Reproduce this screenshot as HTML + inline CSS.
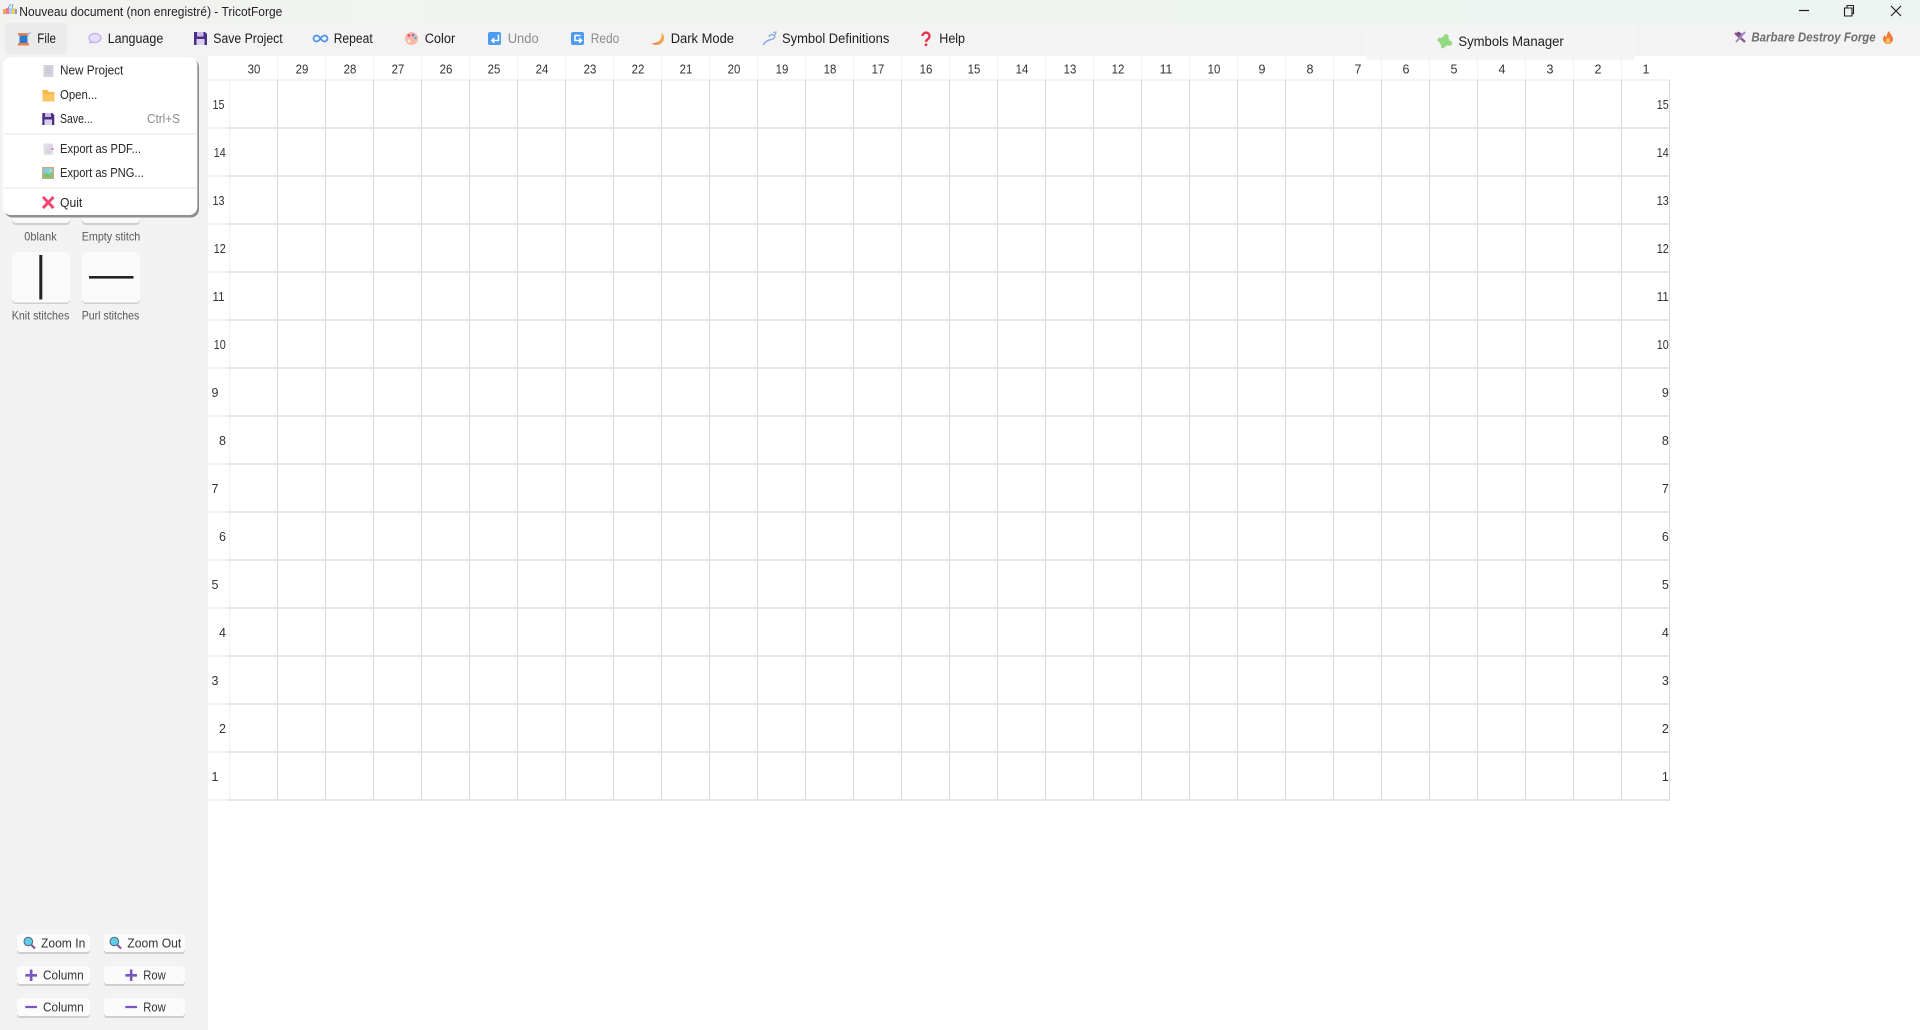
<!DOCTYPE html>
<html lang="en"><head><meta charset="utf-8"><title>TricotForge</title>
<style>
html,body{margin:0;padding:0;background:#fff;width:1920px;height:1030px;overflow:hidden}
svg{display:block;filter:blur(.3px)}
text{font-family:"Liberation Sans",sans-serif;white-space:pre}
.t{font-size:13.5px;fill:#1c1c1c}
.d{font-size:13.5px;fill:#8c8c8c}
.m{font-size:12.5px;fill:#262626}
.s{font-size:12px;fill:#5a5a5a}
.b{font-size:12.5px;fill:#333}
.n{font-size:12.5px;fill:#333}
.c{text-anchor:middle}
.e{text-anchor:end}
</style></head><body>
<svg xmlns="http://www.w3.org/2000/svg" width="1920" height="1030" viewBox="0 0 1920 1030">
<defs><linearGradient id="tb" x1="0" x2="1" y1="0" y2="0"><stop offset="0" stop-color="#f2f3f0"/><stop offset=".5" stop-color="#eff4f0"/><stop offset="1" stop-color="#edf4f1"/></linearGradient></defs>
<rect width="1920" height="1030" fill="#fff"/>
<rect width="1920" height="24" fill="url(#tb)"/>
<rect y="24" width="1920" height="32" fill="#f3f3f3"/>
<rect y="56" width="208" height="974" fill="#f2f2f2"/>

<!-- title bar -->
<g><rect x="3" y="9" width="3" height="5" fill="#f2a65a"/><rect x="6" y="8" width="3" height="6" fill="#f07a9a"/><rect x="9" y="8" width="3" height="6" fill="#a8cfe8"/><rect x="12" y="8" width="3" height="6" fill="#e3d45a"/><rect x="15" y="9" width="2" height="5" fill="#a58ae0"/><path d="M8 8 L11 4 M12 8 L13 4" stroke="#6aa0c8" stroke-width="1"/></g>
<text x="19.3" y="15.9" font-size="12.5" fill="#222" textLength="263" lengthAdjust="spacingAndGlyphs">Nouveau document (non enregistré) - TricotForge</text>
<path d="M1799 10.5H1809" stroke="#222" stroke-width="1.2"/>
<path d="M1844.5 8h7.5v8h-7.5z M1847 8v-2.500h6.500v8h-1.500" fill="none" stroke="#222" stroke-width="1.1"/>
<path d="M1891 6L1901 16M1901 6L1891 16" stroke="#222" stroke-width="1.2"/>

<!-- toolbar -->
<rect x="5" y="23" width="62" height="31" rx="5" fill="#ebebeb"/>
<rect x="18" y="33" width="11" height="2.5" fill="#e8834a"/><rect x="18" y="43" width="11" height="2.5" fill="#e8834a"/><rect x="19.5" y="35.5" width="8" height="7.5" fill="#2c7ad0"/><path d="M27 35L31 32" stroke="#9fc6ea" stroke-width="1.2"/>
<text class="t" x="37.3" y="43.1" textLength="18.7" lengthAdjust="spacingAndGlyphs">File</text>

<ellipse cx="95" cy="38" rx="6" ry="4.5" fill="#e6def8" stroke="#c4b2ec" stroke-width="1.4"/><path d="M90 41l-1 3 4-1.5z" fill="#c4b2ec"/>
<text class="t" x="107.7" y="43.1" textLength="55.6" lengthAdjust="spacingAndGlyphs">Language</text>

<path d="M194 32h11l2 2v11h-13z" fill="#4a2f86"/><rect x="197" y="32" width="6.5" height="4.5" fill="#cbb8e8"/><rect x="196.5" y="39" width="8" height="6" fill="#dccfee"/>
<text class="t" x="213.3" y="43.1" textLength="69.4" lengthAdjust="spacingAndGlyphs">Save Project</text>

<path d="M320.5 38.5c-1.5-2.2-2.8-3-4-3a3 3 0 0 0 0 6c1.2 0 2.5-.8 4-3c1.5-2.2 2.8-3 4-3a3 3 0 0 1 0 6c-1.2 0-2.5-.8-4-3z" fill="none" stroke="#4d92ec" stroke-width="1.7"/>
<text class="t" x="333.7" y="43.1" textLength="39" lengthAdjust="spacingAndGlyphs">Repeat</text>

<circle cx="411.5" cy="38.5" r="6.5" fill="#f7b9a6"/><circle cx="409" cy="35.5" r="1.4" fill="#e0507a"/><circle cx="413" cy="35" r="1.3" fill="#7a72d8"/><circle cx="415.5" cy="38" r="1.3" fill="#52b0d8"/><circle cx="409" cy="41" r="1.4" fill="#f5f0e6"/>
<text class="t" x="424.7" y="43.1" textLength="30.6" lengthAdjust="spacingAndGlyphs">Color</text>

<rect x="488" y="32" width="13" height="13" rx="2" fill="#4d9bef"/><path d="M497.5 35.5h1v5h-6.5m2.3-2.3l-2.5 2.3 2.5 2.3" fill="none" stroke="#fff" stroke-width="1.5"/>
<text class="d" x="507.7" y="43.1" textLength="31" lengthAdjust="spacingAndGlyphs">Undo</text>

<rect x="571" y="32" width="13" height="13" rx="2" fill="#4d9bef"/><path d="M580.5 35.5h-5.5v5h6.5m-2.3-2.3l2.5 2.3-2.5 2.3" fill="none" stroke="#fff" stroke-width="1.5"/>
<text class="d" x="590.7" y="43.1" textLength="28.6" lengthAdjust="spacingAndGlyphs">Redo</text>

<path d="M661.500 32.500c3.500 3 3.500 9-1 11.500-3 1.600-6.500 1.200-9-1 3 .5 6.500-.6 8.500-3 1.500-2 2-4.800 1.500-7.500z" fill="#f4a64d"/><path d="M651.500 43c3.200.5 6.500-.3 8.500-2.500-1 3.500-5.500 5.500-8.500 2.500z" fill="#ef7f4a"/>
<text class="t" x="670.7" y="43.1" textLength="63.3" lengthAdjust="spacingAndGlyphs">Dark Mode</text>

<path d="M763 45c2-3 5-5 8-5.500 3-.5 4.500-2.500 3.500-4-1-1.500-3.500-1-6 1" fill="none" stroke="#86a9e2" stroke-width="1.4"/><path d="M773 32.500l3-.5-.7 3" fill="none" stroke="#86a9e2" stroke-width="1.100"/>
<text class="t" x="782" y="43.1" textLength="107.3" lengthAdjust="spacingAndGlyphs">Symbol Definitions</text>

<path d="M922.500 36a3.500 3.500 0 1 1 5.500 3c-1.500 1-2 1.700-2 3" fill="none" stroke="#e9304f" stroke-width="2.300"/><circle cx="926" cy="44.800" r="1.400" fill="#e9304f"/>
<text class="t" x="939.3" y="43.1" textLength="25.7" lengthAdjust="spacingAndGlyphs">Help</text>

<!-- Symbols manager panel -->
<rect x="1366.500" y="27.500" width="268" height="32" fill="#f4f4f4" stroke="#f7f7f7"/>
<g fill="#93d883" transform="rotate(18 1444.500 41.500)"><rect x="1440.500" y="37.500" width="8" height="8"/><circle cx="1444.500" cy="36.500" r="2.600"/><circle cx="1449.800" cy="41.500" r="2.600"/><circle cx="1439.300" cy="41.500" r="2.100"/><circle cx="1444.500" cy="46.500" r="2.100"/></g>
<text class="t" x="1458.400" y="46" textLength="105.400" lengthAdjust="spacingAndGlyphs">Symbols Manager</text>

<path d="M1735 33l10 9" stroke="#8a5a8c" stroke-width="2.400"/><path d="M1745 32l-9 10" stroke="#a488c0" stroke-width="2"/><path d="M1738 31.500l4 2-2 2.500-4-2z" fill="#7a4a86"/>
<text x="1751.400" y="41.500" font-size="12.500" font-weight="700" font-style="italic" fill="#6e6e6e" textLength="124.300" lengthAdjust="spacingAndGlyphs">Barbare Destroy Forge</text>
<path d="M1889 31c1 3 4 5 4 8a5 5 0 0 1-10 0c0-2 1-3 2-4 0 1 .5 2 1.300 2 .7-2 .7-4 2.700-6z" fill="#f0793a"/><path d="M1888 37c1 1.500 2.500 2.500 2.500 4a2.500 2.500 0 0 1-5 0c0-1.500 1.700-2.500 2.500-4z" fill="#f8c04f"/>

<!-- grid -->
<g fill="#f2f2f2"><rect x="208" y="79" width="1462" height="2"/><rect x="208" y="127" width="21" height="2"/><rect x="208" y="175" width="21" height="2"/><rect x="208" y="223" width="21" height="2"/><rect x="208" y="271" width="21" height="2"/><rect x="208" y="319" width="21" height="2"/><rect x="208" y="367" width="21" height="2"/><rect x="208" y="415" width="21" height="2"/><rect x="208" y="463" width="21" height="2"/><rect x="208" y="511" width="21" height="2"/><rect x="208" y="559" width="21" height="2"/><rect x="208" y="607" width="21" height="2"/><rect x="208" y="655" width="21" height="2"/><rect x="208" y="703" width="21" height="2"/><rect x="208" y="751" width="21" height="2"/><rect x="208" y="799" width="21" height="2"/></g>
<path d="M229.500 80V800" stroke="#f0f0f0" stroke-width="1"/>
<path d="M277.500 56V80M325.500 56V80M373.500 56V80M421.500 56V80M469.500 56V80M517.500 56V80M565.500 56V80M613.500 56V80M661.500 56V80M709.500 56V80M757.500 56V80M805.500 56V80M853.500 56V80M901.500 56V80M949.500 56V80M997.500 56V80M1045.500 56V80M1093.500 56V80M1141.500 56V80M1189.500 56V80M1237.500 56V80M1285.500 56V80M1333.500 56V80M1381.500 56V80M1429.500 56V80M1477.500 56V80M1525.500 56V80M1573.500 56V80M1621.500 56V80" stroke="#f1f1f1" stroke-width="1"/>
<path d="M277.500 80V800M325.500 80V800M373.500 80V800M421.500 80V800M469.500 80V800M517.500 80V800M565.500 80V800M613.500 80V800M661.500 80V800M709.500 80V800M757.500 80V800M805.500 80V800M853.500 80V800M901.500 80V800M949.500 80V800M997.500 80V800M1045.500 80V800M1093.500 80V800M1141.500 80V800M1189.500 80V800M1237.500 80V800M1285.500 80V800M1333.500 80V800M1381.500 80V800M1429.500 80V800M1477.500 80V800M1525.500 80V800M1573.500 80V800M1621.500 80V800M1669.500 80V800" stroke="#dadada" stroke-width="1.100"/>
<path d="M229 128H1670M229 176H1670M229 224H1670M229 272H1670M229 320H1670M229 368H1670M229 416H1670M229 464H1670M229 512H1670M229 560H1670M229 608H1670M229 656H1670M229 704H1670M229 752H1670M229 800H1670" stroke="#e6e6e6" stroke-width="2"/>

<!-- column labels -->
<g class="n" text-anchor="middle">
<text class="n c" x="254" y="73.600" textLength="12.700" lengthAdjust="spacingAndGlyphs">30</text>
<text class="n c" x="302" y="73.600" textLength="12.700" lengthAdjust="spacingAndGlyphs">29</text>
<text class="n c" x="350" y="73.600" textLength="12.700" lengthAdjust="spacingAndGlyphs">28</text>
<text class="n c" x="398" y="73.600" textLength="12.700" lengthAdjust="spacingAndGlyphs">27</text>
<text class="n c" x="446" y="73.600" textLength="12.700" lengthAdjust="spacingAndGlyphs">26</text>
<text class="n c" x="494" y="73.600" textLength="12.700" lengthAdjust="spacingAndGlyphs">25</text>
<text class="n c" x="542" y="73.600" textLength="12.700" lengthAdjust="spacingAndGlyphs">24</text>
<text class="n c" x="590" y="73.600" textLength="12.700" lengthAdjust="spacingAndGlyphs">23</text>
<text class="n c" x="638" y="73.600" textLength="12.700" lengthAdjust="spacingAndGlyphs">22</text>
<text class="n c" x="686" y="73.600" textLength="12.700" lengthAdjust="spacingAndGlyphs">21</text>
<text class="n c" x="734" y="73.600" textLength="12.700" lengthAdjust="spacingAndGlyphs">20</text>
<text class="n c" x="782" y="73.600" textLength="12.700" lengthAdjust="spacingAndGlyphs">19</text>
<text class="n c" x="830" y="73.600" textLength="12.700" lengthAdjust="spacingAndGlyphs">18</text>
<text class="n c" x="878" y="73.600" textLength="12.700" lengthAdjust="spacingAndGlyphs">17</text>
<text class="n c" x="926" y="73.600" textLength="12.700" lengthAdjust="spacingAndGlyphs">16</text>
<text class="n c" x="974" y="73.600" textLength="12.700" lengthAdjust="spacingAndGlyphs">15</text>
<text class="n c" x="1022" y="73.600" textLength="12.700" lengthAdjust="spacingAndGlyphs">14</text>
<text class="n c" x="1070" y="73.600" textLength="12.700" lengthAdjust="spacingAndGlyphs">13</text>
<text class="n c" x="1118" y="73.600" textLength="12.700" lengthAdjust="spacingAndGlyphs">12</text>
<text class="n c" x="1166" y="73.600" textLength="12.700" lengthAdjust="spacingAndGlyphs">11</text>
<text class="n c" x="1214" y="73.600" textLength="12.700" lengthAdjust="spacingAndGlyphs">10</text>
<text class="n c" x="1262" y="73.600">9</text>
<text class="n c" x="1310" y="73.600">8</text>
<text class="n c" x="1358" y="73.600">7</text>
<text class="n c" x="1406" y="73.600">6</text>
<text class="n c" x="1454" y="73.600">5</text>
<text class="n c" x="1502" y="73.600">4</text>
<text class="n c" x="1550" y="73.600">3</text>
<text class="n c" x="1598" y="73.600">2</text>
<text class="n c" x="1646" y="73.600">1</text>
</g>
<!-- left row labels -->
<text class="n" x="212.500" y="109" textLength="12" lengthAdjust="spacingAndGlyphs">15</text>
<text class="n e" x="225.700" y="157" textLength="12" lengthAdjust="spacingAndGlyphs">14</text>
<text class="n" x="212.500" y="205" textLength="12" lengthAdjust="spacingAndGlyphs">13</text>
<text class="n e" x="225.700" y="253" textLength="12" lengthAdjust="spacingAndGlyphs">12</text>
<text class="n" x="212.500" y="301" textLength="12" lengthAdjust="spacingAndGlyphs">11</text>
<text class="n e" x="225.700" y="349" textLength="12" lengthAdjust="spacingAndGlyphs">10</text>
<text class="n" x="211.500" y="397">9</text>
<text class="n e" x="226" y="445">8</text>
<text class="n" x="211.500" y="493">7</text>
<text class="n e" x="226" y="541">6</text>
<text class="n" x="211.500" y="589">5</text>
<text class="n e" x="226" y="637">4</text>
<text class="n" x="211.500" y="685">3</text>
<text class="n e" x="226" y="733">2</text>
<text class="n" x="211.500" y="781">1</text>
<!-- right row labels -->
<text class="n e" x="1668.800" y="109" textLength="12" lengthAdjust="spacingAndGlyphs">15</text>
<text class="n e" x="1668.800" y="157" textLength="12" lengthAdjust="spacingAndGlyphs">14</text>
<text class="n e" x="1668.800" y="205" textLength="12" lengthAdjust="spacingAndGlyphs">13</text>
<text class="n e" x="1668.800" y="253" textLength="12" lengthAdjust="spacingAndGlyphs">12</text>
<text class="n e" x="1668.800" y="301" textLength="12" lengthAdjust="spacingAndGlyphs">11</text>
<text class="n e" x="1668.800" y="349" textLength="12" lengthAdjust="spacingAndGlyphs">10</text>
<text class="n e" x="1668.800" y="397">9</text>
<text class="n e" x="1668.800" y="445">8</text>
<text class="n e" x="1668.800" y="493">7</text>
<text class="n e" x="1668.800" y="541">6</text>
<text class="n e" x="1668.800" y="589">5</text>
<text class="n e" x="1668.800" y="637">4</text>
<text class="n e" x="1668.800" y="685">3</text>
<text class="n e" x="1668.800" y="733">2</text>
<text class="n e" x="1668.800" y="781">1</text>

<!-- stitch tiles -->
<g fill="#d0d0d0"><rect x="12" y="180" width="58" height="45" rx="4"/><rect x="82" y="180" width="58" height="45" rx="4"/><rect x="12" y="252" width="58" height="52" rx="4"/><rect x="82" y="252" width="58" height="52" rx="4"/></g>
<g fill="#fafafa"><rect x="12" y="178" width="58" height="45" rx="4"/><rect x="82" y="178" width="58" height="45" rx="4"/><rect x="12" y="252" width="58" height="50.500" rx="4"/><rect x="82" y="252" width="58" height="50.500" rx="4"/></g>
<rect x="39.300" y="255" width="3" height="44.500" fill="#222"/>
<rect x="89" y="276" width="44.500" height="2.600" fill="#222"/>
<text class="s" x="24.300" y="240.600" textLength="32.400" lengthAdjust="spacingAndGlyphs">0blank</text>
<text class="s" x="81.700" y="240.600" textLength="58.600" lengthAdjust="spacingAndGlyphs">Empty stitch</text>
<text class="s" x="11.700" y="319.600" textLength="57.600" lengthAdjust="spacingAndGlyphs">Knit stitches</text>
<text class="s" x="81.700" y="319.600" textLength="57.600" lengthAdjust="spacingAndGlyphs">Purl stitches</text>

<!-- file menu -->
<rect x="4.500" y="59" width="194.500" height="158.500" rx="8" fill="#8f8f8f"/>
<rect x="2.700" y="57.300" width="194.600" height="157.700" rx="8" fill="#fff"/>
<rect x="3" y="133" width="194" height="2" fill="#f3f3f3"/>
<rect x="3" y="187" width="194" height="2" fill="#f3f3f3"/>

<rect x="43.500" y="65" width="10" height="12" fill="#d5d2de"/><path d="M46 68h5M46 70.500h5M46 73h5" stroke="#bcb8c8" stroke-width=".8"/>
<text class="m" x="60" y="74.700" textLength="63.300" lengthAdjust="spacingAndGlyphs">New Project</text>

<path d="M42.500 90h5l1.500 2h5.500v9.500h-12z" fill="#fbb84c"/><path d="M42.500 94.500h12v7h-12z" fill="#fcc564"/>
<text class="m" x="60" y="99" textLength="37.300" lengthAdjust="spacingAndGlyphs">Open...</text>

<path d="M42.300 113h10l2 2v10h-12z" fill="#4a2f86"/><rect x="45" y="113" width="6" height="4" fill="#cbb8e8"/><rect x="44.500" y="119.500" width="7.500" height="5.500" fill="#dccfee"/>
<text class="m" x="60" y="123" textLength="32.700" lengthAdjust="spacingAndGlyphs">Save...</text>
<text x="147" y="123" font-size="12.500" fill="#8a8a8a" textLength="33" lengthAdjust="spacingAndGlyphs">Ctrl+S</text>

<rect x="43.500" y="143.500" width="9.500" height="11.500" fill="#e2dfe8"/><path d="M49 146h3M46 149h5M46 152h5" stroke="#c2bed0" stroke-width=".9"/><circle cx="52.500" cy="149" r="1.100" fill="#e86a9a"/>
<text class="m" x="60" y="153" textLength="81" lengthAdjust="spacingAndGlyphs">Export as PDF...</text>

<rect x="42" y="167" width="12" height="12" fill="#d9a27e"/><rect x="43.200" y="168.200" width="9.600" height="9.600" fill="#7ed0e0"/><path d="M43.200 177.800v-3.300l3-2 3 2 3.600-1.500v4.800z" fill="#7cc46a"/><circle cx="50.500" cy="170.500" r="1.100" fill="#f5e06a"/>
<text class="m" x="60" y="177" textLength="83.700" lengthAdjust="spacingAndGlyphs">Export as PNG...</text>

<path d="M43 197L53.500 208M53.500 197L43 208" stroke="#f0456f" stroke-width="3"/>
<text class="m" x="60" y="206.800" textLength="22.300" lengthAdjust="spacingAndGlyphs">Quit</text>

<!-- bottom buttons -->
<g fill="#cfcfcf"><rect x="17" y="936" width="73" height="18" rx="3"/><rect x="104" y="936" width="81" height="18" rx="3"/><rect x="17" y="968" width="73" height="18" rx="3"/><rect x="104" y="968" width="81" height="18" rx="3"/><rect x="17" y="1000" width="73" height="18" rx="3"/><rect x="104" y="1000" width="81" height="18" rx="3"/></g>
<g fill="#fbfbfb"><rect x="17" y="934" width="73" height="18" rx="3"/><rect x="104" y="934" width="81" height="18" rx="3"/><rect x="17" y="966" width="73" height="18" rx="3"/><rect x="104" y="966" width="81" height="18" rx="3"/><rect x="17" y="998" width="73" height="18" rx="3"/><rect x="104" y="998" width="81" height="18" rx="3"/></g>

<circle cx="28.300" cy="941.500" r="4.300" fill="#5fcfe8" stroke="#55607a" stroke-width="1"/><path d="M31.500 945l3.500 3.500" stroke="#8a4a9a" stroke-width="2"/>
<circle cx="114.300" cy="941.500" r="4.300" fill="#5fcfe8" stroke="#55607a" stroke-width="1"/><path d="M117.500 945l3.500 3.500" stroke="#8a4a9a" stroke-width="2"/>
<text class="b" x="41" y="947.400" textLength="44.300" lengthAdjust="spacingAndGlyphs">Zoom In</text>
<text class="b" x="127.300" y="947.400" textLength="54" lengthAdjust="spacingAndGlyphs">Zoom Out</text>

<path d="M25.300 975.300H37M31.150 969.500V981M125.300 975.300H137M131.150 969.500V981" stroke="#7a57c0" stroke-width="2.600" fill="none"/>
<text class="b" x="43" y="979.400" textLength="40.700" lengthAdjust="spacingAndGlyphs">Column</text>
<text class="b" x="143.300" y="979.400" textLength="22.400" lengthAdjust="spacingAndGlyphs">Row</text>

<path d="M25.300 1007H37M125.300 1007H137" stroke="#7a57c0" stroke-width="2.200" fill="none"/>
<text class="b" x="43" y="1011.400" textLength="40.700" lengthAdjust="spacingAndGlyphs">Column</text>
<text class="b" x="143.300" y="1011.400" textLength="22.400" lengthAdjust="spacingAndGlyphs">Row</text>
</svg>
</body></html>
